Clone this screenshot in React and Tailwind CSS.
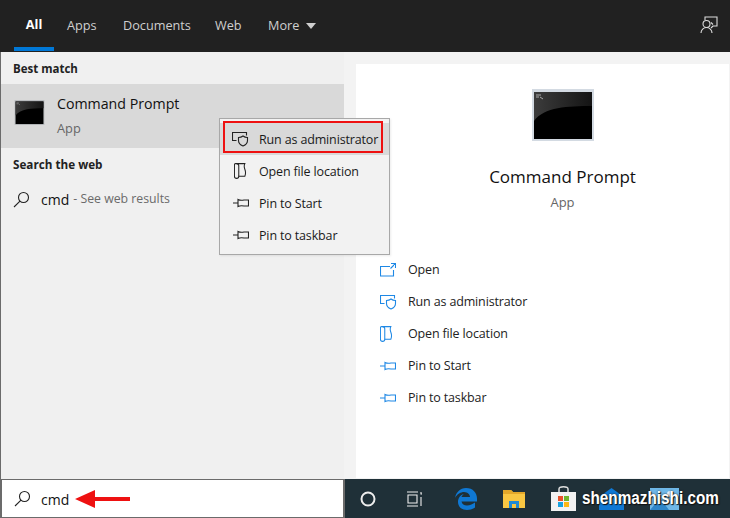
const TABS = [
  { label: 'Apps', width: 'w-[56px]' },
  { label: 'Documents', width: 'w-[92px]' },
  { label: 'Web', width: 'w-[53px]' },
];

const FONT = "font-['Open_Sans','Noto_Sans',sans-serif]";

function CmdIcon({ w, h, small }) {
  const id = small ? 'cmd-s' : 'cmd-l';
  return (
    <svg width={w} height={h} viewBox="0 0 62 52" className="shrink-0">
      <defs>
        <linearGradient id={id} x1="0" y1="0" x2="1" y2="0">
          <stop offset="0" stopColor="#3c3c3c" />
          <stop offset="1" stopColor="#141414" />
        </linearGradient>
      </defs>
      <rect x="0" y="0" width="62" height="52" fill={small ? '#b9bcbf' : '#d3dae2'} />
      <rect x="2" y="3" width="58" height="47" fill="#000" />
      <path d="M2 3h58v14c-24 0-48 1-58 15z" fill={`url(#${id})`} />
      <path d="M4 6h5M4 8h3M8 8l3 2" stroke="#aaa" strokeWidth="1" fill="none" />
    </svg>
  );
}

function SearchIcon() {
  return (
    <svg width="17" height="17" viewBox="0 0 17 17" fill="none" stroke="#222" strokeWidth="1.1" className="shrink-0">
      <circle cx="10.5" cy="6.5" r="5" />
      <path d="M7 10.2 1 16" />
    </svg>
  );
}

function ShieldIcon({ color }) {
  return (
    <svg width="17" height="16" viewBox="0 0 17 16" fill="none" stroke={color} strokeWidth="1.1">
      <path d="M4.5 9.5H.5V1.5h14v3" />
      <path d="M6.5 6.5c2 0 3.500-.7 4.500-1.500 1 .8 2.500 1.500 4.500 1.500v3c0 3-2 4.500-4.500 5.500-2.500-1-4.500-2.500-4.500-5.500z" />
    </svg>
  );
}

function FileIcon({ color }) {
  return (
    <svg width="13" height="16" viewBox="0 0 15 18" fill="none" stroke={color} strokeWidth="1.2">
      <path d="M2 .5h10.500c-1 2-1 4 0 6.500 1 2.500 1 5.500 0 8H5.500c0 1-.8 2.500-2.500 2.500-1.500 0-2.500-1-2.500-2.500V2C.5 1.200 1 .5 2 .5z" />
      <path d="M3 .5c1.500 0 2.500 1 2.500 2.500v12" />
    </svg>
  );
}

function PinIcon({ color }) {
  return (
    <svg width="16" height="12" viewBox="0 0 16 12" fill="none" stroke={color} strokeWidth="1.1">
      <path d="M0 6h5M5 2.500c2 1 4 1 6 .5h4.500v6H11c-2-.5-4-.5-6 .5z" />
    </svg>
  );
}

function OpenIcon({ color }) {
  return (
    <svg width="16" height="14" viewBox="0 0 16 14" fill="none" stroke={color} strokeWidth="1.1">
      <path d="M10 3.500H.5v9.500h13V7" />
      <path d="M11 .5h4.500V5M15.500.5 10.500 5.500" />
    </svg>
  );
}

const MENU = [
  { label: 'Run as administrator', Icon: ShieldIcon, boxed: true },
  { label: 'Open file location', Icon: FileIcon },
  { label: 'Pin to Start', Icon: PinIcon },
  { label: 'Pin to taskbar', Icon: PinIcon },
];

const ACTIONS = [
  { label: 'Open', Icon: OpenIcon },
  { label: 'Run as administrator', Icon: ShieldIcon },
  { label: 'Open file location', Icon: FileIcon },
  { label: 'Pin to Start', Icon: PinIcon },
  { label: 'Pin to taskbar', Icon: PinIcon },
];

function ContextMenu() {
  return (
    <div className="absolute left-[219px] top-[118px] w-[171px] h-[137px] bg-[#f2f2f2] border border-[#a8a8a8] pt-[4px] text-[12.5px] tracking-[-0.15px] text-[#1a1a1a] shadow-[1px_1px_2px_rgba(0,0,0,0.08)]">
      {MENU.map(({ label, Icon, boxed }) => (
        <div
          key={label}
          className={`flex items-center h-[32px] ${boxed ? 'bg-[#d9d9d9] relative' : ''}`}
        >
          <div className="w-[39px] flex justify-center pl-[2px]">
            <Icon color="#222" />
          </div>
          <span className="whitespace-nowrap pt-[2px]">{label}</span>
          {boxed && (
            <div className="absolute left-[3px] -top-[2px] w-[160px] h-[32px] border-2 border-[#ee1111]" />
          )}
        </div>
      ))}
    </div>
  );
}

function Taskbar() {
  return (
    <div className="relative flex-1 h-full bg-[#1f3038] flex items-center">
      <div className="w-[46px] flex justify-center">
        <svg width="16" height="16" viewBox="0 0 16 16" fill="none" stroke="#eee" strokeWidth="2">
          <circle cx="8" cy="8" r="6.500" />
        </svg>
      </div>
      <div className="w-[48px] flex justify-center">
        <svg width="18" height="16" viewBox="0 0 18 16" fill="none" stroke="#eee" strokeWidth="1.1">
          <path d="M1 1h11M1 15h11M2 4h9v8H2zM15 1v2h1M15 6v9" />
        </svg>
      </div>
      <div className="w-[53px] flex justify-center">
        <svg width="22" height="22" viewBox="0 0 22 22" fill="#0f78d4">
          <path d="M11 0C5 0 1 4.500 0 10c2-4 6-6 9-6 4 0 6 3 6 5H6.500c.5-1.500 1.500-2.500 2.500-3C4.500 7 3 11 3 14c0 5 4 8 9 8 3 0 6-1 8-2.500v-5c-2 1.500-5 3-8 3-3 0-5-1.500-5.500-4H22v-3C22 5 18 0 11 0z" />
        </svg>
      </div>
      <div className="w-[44px] flex justify-center">
        <svg width="22" height="19" viewBox="0 0 22 19">
          <path d="M0 1h8l2 2h12v16H0z" fill="#f9c642" />
          <path d="M0 1h8l2 2h12v2H0z" fill="#e3a72a" />
          <path d="M6 19v-7h10v7h-3v-4H9v4z" fill="#1f8ad6" />
        </svg>
      </div>
      <div className="w-[55px] flex justify-center">
        <svg width="25" height="25" viewBox="0 0 25 25">
          <path d="M8 6V3c0-3 9-3 9 0v3" fill="none" stroke="#ddd" strokeWidth="1.500" />
          <rect y="6" width="25" height="19" fill="#f2f2f2" />
          <rect x="7" y="10" width="5" height="5" fill="#e8502a" />
          <rect x="13" y="10" width="5" height="5" fill="#6fb52c" />
          <rect x="7" y="16" width="5" height="5" fill="#18a2e0" />
          <rect x="13" y="16" width="5" height="5" fill="#fdb813" />
        </svg>
      </div>
      <div className="w-[41px] flex justify-center">
        <svg width="25" height="22" viewBox="0 0 25 22">
          <path d="M0 9 12.500 0 25 9v13H0z" fill="#0f78d4" />
          <path d="M0 9h25l-12.500 7z" fill="#1f8ad6" />
        </svg>
      </div>
      <div className="w-[64px] flex justify-center">
        <svg width="29" height="22" viewBox="0 0 29 22">
          <rect width="29" height="22" fill="#6fb8e8" />
          <circle cx="20" cy="6" r="3" fill="#e8f4fc" />
          <path d="M0 22 10 10l9 12z" fill="#2f86c9" />
        </svg>
      </div>
      <span className="absolute left-[237px] top-[9px] font-['Liberation_Sans',sans-serif] font-bold text-[18px] leading-[20px] text-white whitespace-nowrap scale-x-[0.85] origin-left [text-shadow:0_0_2px_#111,1px_1px_1px_#111]">
        shenmazhishi.com
      </span>
    </div>
  );
}

export default function App() {
  return (
    <div className={`relative w-[730px] h-[518px] overflow-hidden bg-[#1f1f1f] flex flex-col ${FONT}`}>
      {/* top tabs */}
      <div className="h-[52px] shrink-0 flex items-stretch pl-[14px] bg-[#212121] text-[12.7px] text-[#cfcfcf] pt-[3px]">
        <div className="w-[40px] mb-px flex items-center justify-center border-b-4 border-[#0078d7] text-white font-bold">
          All
        </div>
        <div className="w-[13px]" />
        {TABS.map((t) => (
          <div key={t.label} className={`${t.width} flex items-center pb-[3px]`}>
            {t.label}
          </div>
        ))}
        <div className="flex items-center gap-[7px] pb-[3px]">
          More
          <span className="w-0 h-0 border-x-[5px] border-x-transparent border-t-[6px] border-t-[#cfcfcf]" />
        </div>
        <div className="flex-1 flex items-center justify-end pr-[12px] pb-[5px]">
          <svg width="18" height="18" viewBox="0 0 18 18" fill="none" stroke="#ddd" strokeWidth="1.1">
            <path d="M5 4V1h12v9h-4l-2 2" />
            <path d="M11 6.500 13 8.500" />
            <circle cx="6.500" cy="8" r="3.500" />
            <path d="M1 17c0-3 2.500-5.500 5.500-5.500S12 14 12 17" />
          </svg>
        </div>
      </div>

      {/* results */}
      <div className="flex-1 flex min-h-0 border-l border-[#6b6b6b]">
        <div className="w-[343px] bg-[#f0f0f0]">
          <div className="h-[32px] flex items-center pl-[12px] pt-[2px] text-[11.5px] font-bold text-[#222]">Best match</div>
          <div className="h-[64px] bg-[#d9d9d9] flex pl-[13px] items-start">
            <div className="pt-[16px]">
              <CmdIcon w={31} h={25} small />
            </div>
            <div className="pl-[12px] pt-[9px]">
              <div className="text-[14.2px] leading-[22px] text-[#111]">Command Prompt</div>
              <div className="text-[12.8px] leading-[18px] mt-[4px] text-[#666]">App</div>
            </div>
          </div>
          <div className="h-[32px] flex items-center pl-[12px] pt-[2px] text-[11.7px] font-bold text-[#222]">Search the web</div>
          <div className="h-[38px] flex items-center pl-[12px] gap-[11px]">
            <SearchIcon />
            <span className="text-[14px] text-[#111]">cmd</span>
            <span className="text-[12.3px] text-[#6a6a6a] -ml-[7px]">- See web results</span>
          </div>
        </div>
        <div className="flex-1 bg-[#f3f3f3] pl-[12px] pt-[12px] pr-px pb-[1px]">
          <div className="h-full bg-white flex flex-col">
            <div className="flex flex-col items-center pt-[25px] pl-[40px]">
              <CmdIcon w={62} h={52} />
              <div className="text-[17px] leading-[26px] text-[#111] mt-[23px]">Command Prompt</div>
              <div className="text-[13px] leading-[18px] text-[#666] mt-[3px]">App</div>
            </div>
            <div className="mt-[43px]">
              {ACTIONS.map(({ label, Icon }) => (
                <div key={label} className="h-[32px] flex items-center text-[12.5px] tracking-[-0.15px] text-[#222]">
                  <div className="w-[52px] pl-[24px]">
                    <Icon color="#1e88e5" />
                  </div>
                  <span>{label}</span>
                </div>
              ))}
            </div>
          </div>
        </div>
      </div>

      {/* search box + taskbar */}
      <div className="h-[39px] shrink-0 flex items-stretch bg-[#1f3038]">
        <div className="w-[345px] shrink-0 bg-[#6b6b6b] px-[2px] py-[1px]">
          <div className="h-full bg-white flex items-center pl-[12px] gap-[10px]">
            <SearchIcon />
            <span className="text-[14px] text-[#111] pt-px">cmd</span>
            <svg width="55" height="20" viewBox="0 0 55 20" className="-ml-[4px] mt-px">
              <path d="M0 10 20 1v7h35v4H20v7z" fill="#ee1111" />
            </svg>
          </div>
        </div>
        <Taskbar />
      </div>

      <ContextMenu />
    </div>
  );
}
